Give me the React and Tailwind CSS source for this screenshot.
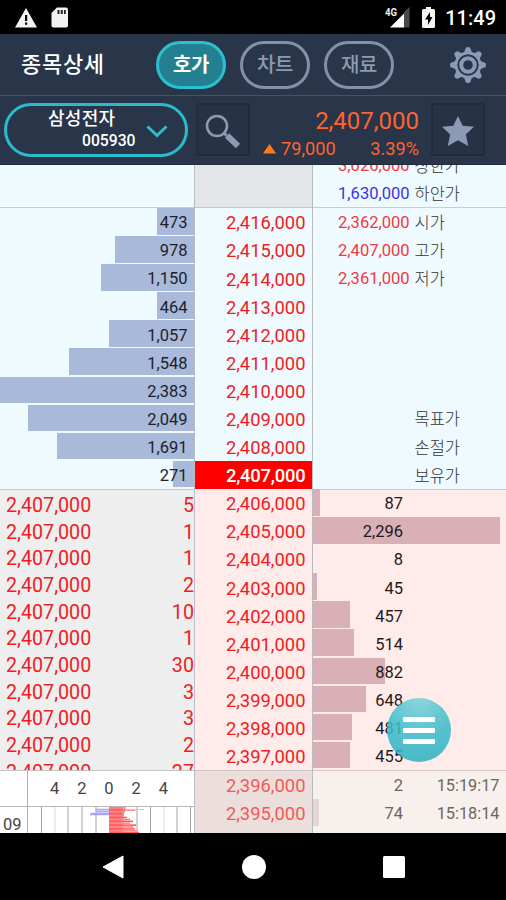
const ASKS = [
  ['473', '2,416,000', 37.5], ['978', '2,415,000', 79], ['1,150', '2,414,000', 93], ['464', '2,413,000', 37.5],
  ['1,057', '2,412,000', 85.5], ['1,548', '2,411,000', 125.5], ['2,383', '2,410,000', 194], ['2,049', '2,409,000', 166],
  ['1,691', '2,408,000', 137], ['271', '2,407,000', 21],
];
const BIDS = [
  ['87', '2,406,000', 7], ['2,296', '2,405,000', 187], ['8', '2,404,000', 0], ['45', '2,403,000', 3.5],
  ['457', '2,402,000', 37], ['514', '2,401,000', 41], ['882', '2,400,000', 72], ['648', '2,399,000', 53],
  ['481', '2,398,000', 39], ['455', '2,397,000', 37],
];
const LOW_BIDS = [['2', '2,396,000', 0, '15:19:17'], ['74', '2,395,000', 6, '15:18:14']];
const INFO = [
  ['2,362,000', '시가'], ['2,407,000', '고가'], ['2,361,000', '저가'], null, null, null, null,
  ['', '목표가'], ['', '손절가'], ['', '보유가'],
];
const TICKS = ['5', '1', '1', '2', '10', '1', '30', '3', '3', '2', '27'];

function StatusBar() {
  return (
    <div className="flex h-[34px] shrink-0 items-center bg-black pr-[10px] pl-[14px] text-white">
      <svg width="24" height="22" viewBox="0 0 24 22" className="-mt-[1px]">
        <path d="M12 2 23 21.500H1Z" fill="#f2f2f2" />
        <path d="M11 9h2.200v6H11zM11 16.500h2.200v2.200H11z" fill="#000" />
      </svg>
      <svg width="17" height="21" viewBox="0 0 17 21" className="ml-[13px]">
        <path d="M6 .5h9a2 2 0 0 1 2 2v16a2 2 0 0 1-2 2H2.500a2 2 0 0 1-2-2V6Z" fill="#f2f2f2" />
        <path d="M6.500 3h2v4h-2zM9.800 3h2v4h-2zM13 3h1.800v4H13z" fill="#222" />
      </svg>
      <div className="flex-1" />
      <svg width="26" height="22" viewBox="0 0 26 22">
        <path d="M24.500 1v20.500H19V6Z" fill="#4a4a4a" />
        <path d="M5 21.500 19 7.500v14Z" fill="#fff" />
        <text x="0" y="9.500" fill="#eee" fontSize="10" fontWeight="700" fontFamily="Roboto, sans-serif" textLength="12" lengthAdjust="spacingAndGlyphs">4G</text>
      </svg>
      <svg width="13" height="21" viewBox="0 0 13 21" className="ml-[11px]">
        <path d="M4 0h5v2h2.500A1.500 1.500 0 0 1 13 3.500v16a1.500 1.500 0 0 1-1.500 1.500h-10A1.500 1.500 0 0 1 0 19.500v-16A1.500 1.500 0 0 1 1.500 2H4Z" fill="#f5f5f5" />
        <path d="M8 5 3 12.500h3V18l4.500-8H8Z" fill="#000" />
      </svg>
      <span className="mt-[2px] ml-[10px] w-[51px] text-right text-[20px] leading-none font-medium whitespace-nowrap">11:49</span>
    </div>
  );
}

function Gear() {
  return (
    <svg width="36" height="38" viewBox="-18 -19 36 38">
      <g fill="#8b9bb6">
        {[0, 45, 90, 135, 180, 225, 270, 315].map((a) => (
          <path key={a} transform={`rotate(${a})`} d="M-4.500-11 -2.500-16.500Q-2.500-18 0-18T2.500-16.500L4.500-11Z" />
        ))}
      </g>
      <circle r="12" fill="none" stroke="#8b9bb6" strokeWidth="3" />
      <circle r="10.500" fill="#293548" />
      <circle r="6.800" fill="none" stroke="#8b9bb6" strokeWidth="4" />
    </svg>
  );
}

function TabPill({ children, active }) {
  const tone = active ? 'border-[#2bc0d1] bg-[#247f90] text-white font-bold' : 'border-[#8290aa] text-[#8b9bb6] font-medium';
  return (
    <div className={`flex h-[48px] w-[70px] items-center justify-center rounded-[24px] border-[3px] pt-[1px] text-[20px] leading-none tracking-[-0.5px] ${tone}`}>
      {children}
    </div>
  );
}

function TopNav() {
  return (
    <div className="flex h-[62px] shrink-0 items-center border-b border-[#465267] bg-[#293548] pr-[20px] pl-[21px]">
      <div className="w-[135px] pt-[1px] text-[22px] leading-none font-medium tracking-[0.7px] whitespace-nowrap text-white">종목상세</div>
      <div className="flex gap-[14px]">
        <TabPill active>호가</TabPill>
        <TabPill>차트</TabPill>
        <TabPill>재료</TabPill>
      </div>
      <div className="ml-auto"><Gear /></div>
    </div>
  );
}

function StockHeader() {
  return (
    <div className="flex h-[69px] shrink-0 items-start border-b border-[#202b3c] bg-[#293548] pt-[7px] pl-[4px]">
      <div className="flex h-[54px] w-[184px] items-center rounded-[27px] border-[3px] border-[#2bbccc]">
        <div className="flex w-[128.500px] flex-col text-white">
          <span className="pl-[41px] text-[18px] leading-[22px] font-medium tracking-[0.3px] whitespace-nowrap">삼성전자</span>
          <span className="pb-[1px] text-right text-[15.700px] leading-[22px] font-medium">005930</span>
        </div>
        <svg width="22" height="14" viewBox="0 0 22 14" className="mt-[3px] ml-[10px]">
          <path d="m1.500 1.500 9.500 9 9.500-9" fill="none" stroke="#2bc0d1" strokeWidth="3" />
        </svg>
      </div>
      <div className="ml-[8px] flex h-[53px] w-[54px] items-center justify-center rounded-[3px] border-2 border-[#202b3c] bg-[#273244]">
        <svg width="36" height="36" viewBox="0 0 36 36" className="mt-[4px]">
          <circle cx="12" cy="12" r="10" fill="none" stroke="#8b9bb6" strokeWidth="2.600" />
          <path d="m18.500 18.500 3 3" stroke="#8b9bb6" strokeWidth="3" />
          <path d="m22 21.500 11 10.500" stroke="#8b9bb6" strokeWidth="6" />
        </svg>
      </div>
      <div className="ml-[13px] flex w-[156px] flex-col text-[#ff6331]">
        <span className="pt-[5px] text-right text-[24px] leading-[26px]">2,407,000</span>
        <div className="flex items-center pt-[4px] text-[18.200px] leading-[22px]">
          <svg width="13" height="10" viewBox="0 0 13 10"><path d="M6.500 0 13 9.500H0Z" fill="#ff7a1c" /></svg>
          <span className="ml-[5px]">79,000</span>
          <span className="ml-auto">3.39%</span>
        </div>
      </div>
      <div className="ml-[12px] flex h-[53px] w-[54px] items-center justify-center rounded-[3px] border-2 border-[#202b3c] bg-[#273244]">
        <svg width="34" height="32" viewBox="0 0 34 32" className="mt-[2px]">
          <path d="m17 1 4.700 9.800 11.300 1-8.200 7.700 2.500 11.500L17 25.300 6.700 31l2.500-11.500L1 11.800l11.300-1Z" fill="#8b9bb6" />
        </svg>
      </div>
    </div>
  );
}

function AskRow({ qty, width }) {
  return (
    <div className="grid h-[28.100px] grid-cols-1 grid-rows-1">
      <div className="col-start-1 row-start-1 mb-[1.500px] justify-self-end bg-[#a8b9d9]" style={{ width }} />
      <span className="z-0 col-start-1 row-start-1 self-center pt-[3px] pr-[6.500px] text-right text-[16.500px] leading-none text-[#1d222b]">{qty}</span>
    </div>
  );
}

function BidRow({ qty, width, time }) {
  const bar = time ? 'bg-[#e6d5d6]' : 'bg-[#d9b0b7]';
  const ink = time ? 'text-[#6b6665]' : 'text-[#1f1a1b]';
  return (
    <div className="grid h-[28.100px] grid-cols-1 grid-rows-1">
      <div className={`col-start-1 row-start-1 mb-[1.500px] justify-self-start ${bar}`} style={{ width }} />
      <div className={`z-0 col-start-1 row-start-1 flex items-center pt-[3px] text-[16.500px] leading-none ${ink}`}>
        <span className="w-[90px] text-right">{qty}</span>
        <span className="flex-1 pr-[6.500px] text-right text-[16.300px]">{time}</span>
      </div>
    </div>
  );
}

function PriceCell({ children, tone }) {
  return <div className={`flex h-[28.100px] items-center justify-end pt-[3px] pr-[6.500px] text-[18.400px] leading-none ${tone}`}>{children}</div>;
}

function InfoRow({ price, label, tone }) {
  return (
    <div className="flex h-[28.100px] shrink-0 items-center pt-[3px] leading-none">
      <span className={`w-[96.500px] text-right text-[16.500px] ${tone}`}>{price}</span>
      <span className="ml-[5px] pt-[1px] text-[16.500px] font-light whitespace-nowrap text-[#333]">{label}</span>
    </div>
  );
}

function MiniChart() {
  const grid = [[41.5, 0], [55, 1], [68, 0], [82, 0], [96, 0], [123, 0], [137, 0], [150.5, 0], [164, 1], [177, 0], [190.5, 0]];
  const reds = [17, 26, 16, 15, 15, 18, 21, 24, 21, 27, 24, 26, 28, 30];
  return (
    <div className="flex h-[63px] flex-col border-t border-[#c6c6c6] bg-white text-[16.500px] leading-none text-[#444]">
      <div className="flex h-[36px] items-center border-b border-[#b8b8b8]">
        <div className="h-full w-[28px] border-r border-[#b0b0b0]" />
        <div className="flex pt-[2px] pl-[13px] text-center">
          {['4', '2', '0', '2', '4'].map((n, i) => <span key={i} className="w-[27.200px]">{n}</span>)}
        </div>
      </div>
      <div className="flex h-[26px]">
        <div className="flex w-[28px] items-center border-r border-[#b0b0b0] pt-[10px] pl-[3px]">09</div>
        <svg width="166" height="26" viewBox="28 0 166 26">
          {grid.map(([x, light]) => <path key={x} d={`M${x} 0V26`} stroke={light ? '#dcdcdc' : '#a5a5a5'} />)}
          <path d="M95.500 2.500H109M96 4.500H109M91 6.500H109M90 7.500H109" stroke="#aaa4ff" strokeWidth="1.300" />
          <path d="M109 0h13v26h-13Z" fill="#ff7676" />
          {reds.map((w, i) => <path key={i} d={`M109 ${i * 1.9 + 1}h${w}`} stroke={i % 2 ? '#ff5c5c' : '#ff8686'} strokeWidth="1.600" />)}
          <path d="M125 2.500h19" stroke="#ffb3b3" />
        </svg>
      </div>
    </div>
  );
}

function LeftColumn() {
  return (
    <div className="flex w-[195px] flex-col border-r border-[#b9c0c4]">
      <div className="h-[43px] border-b border-[#c6d0d4] bg-[#effaff]" />
      <div className="bg-[#effaff]">{ASKS.map(([q, , w]) => <AskRow key={q} qty={q} width={w} />)}</div>
      <div className="h-[281px] overflow-hidden border-t border-[#cccccc] bg-[#eeeeee] pt-[2.500px] text-[19.700px] text-[#ef2025]">
        {TICKS.map((t, i) => (
          <div key={i} className="flex h-[26.700px] items-center justify-between pl-[6px] leading-none">
            <span>2,407,000</span><span>{t}</span>
          </div>
        ))}
      </div>
      <MiniChart />
    </div>
  );
}

function PriceColumn() {
  return (
    <div className="flex w-[118px] flex-col border-r border-[#b9bcbe]">
      <div className="h-[43px] border-b border-[#c3c8ca] bg-[#e2e6e8]" />
      <div className="bg-[#effaff]">
        {ASKS.map(([, p], i) => <PriceCell key={p} tone={i === 9 ? 'bg-[#ff0000] text-white font-medium tracking-[-0.2px]' : 'text-[#ee1c24]'}>{p}</PriceCell>)}
      </div>
      <div className="h-[281px] bg-[#ffebe9]">{BIDS.map(([, p]) => <PriceCell key={p} tone="text-[#ee1c24]">{p}</PriceCell>)}</div>
      <div className="flex-1 border-t border-[#cfc6c4] bg-[#ecdeda]">{LOW_BIDS.map(([, p]) => <PriceCell key={p} tone="text-[#f05a5c]">{p}</PriceCell>)}</div>
    </div>
  );
}

function RightColumn() {
  return (
    <div className="flex flex-1 flex-col">
      <div className="flex h-[43px] flex-col justify-end overflow-hidden border-b border-[#c6d0d4] bg-[#effaff]">
        <InfoRow price="3,026,000" label="상한가" tone="text-[#ee3a3f]" />
        <InfoRow price="1,630,000" label="하안가" tone="text-[#3a35dd]" />
      </div>
      <div className="bg-[#effaff]">
        {INFO.map((r, i) => <InfoRow key={i} price={r && r[0]} label={r && r[1]} tone="text-[#ee3a3f]" />)}
      </div>
      <div className="h-[281px] bg-[#ffebe9] shadow-[inset_0_1px_0_#cfcac9]">{BIDS.map(([q, , w]) => <BidRow key={q} qty={q} width={w} />)}</div>
      <div className="flex-1 border-t border-[#d3cbc8] bg-[#f8f0ec]">{LOW_BIDS.map(([q, , w, t]) => <BidRow key={q} qty={q} width={w} time={t} />)}</div>
    </div>
  );
}

export default function App() {
  return (
    <div className="relative flex h-[900px] w-[506px] flex-col overflow-hidden bg-black font-[Roboto,'Noto_Sans_CJK_KR',sans-serif]">
      <StatusBar />
      <TopNav />
      <StockHeader />
      <div className="flex h-[668px] shrink-0 overflow-hidden">
        <LeftColumn />
        <PriceColumn />
        <RightColumn />
      </div>
      <div className="flex flex-1 items-center justify-between bg-black pr-[101px] pl-[102px]">
        <svg width="22" height="24" viewBox="0 0 22 24"><path d="M21 1v22L1 12Z" fill="#fff" stroke="#fff" strokeLinejoin="round" /></svg>
        <div className="size-[24px] rounded-full bg-white" />
        <div className="size-[22px] rounded-[1.500px] bg-white" />
      </div>
      <button className="absolute top-[698px] left-[387px] flex size-[64px] flex-col items-center justify-center gap-[6px] rounded-full bg-[radial-gradient(circle_at_50%_0%,#83d3dce6_0%,#3dbdcbdb_48%,#2bb0bfe0_100%)]">
        <span className="h-[5px] w-[32px] rounded-[1px] bg-white" />
        <span className="h-[5px] w-[32px] rounded-[1px] bg-white" />
        <span className="h-[5px] w-[32px] rounded-[1px] bg-white" />
      </button>
    </div>
  );
}
